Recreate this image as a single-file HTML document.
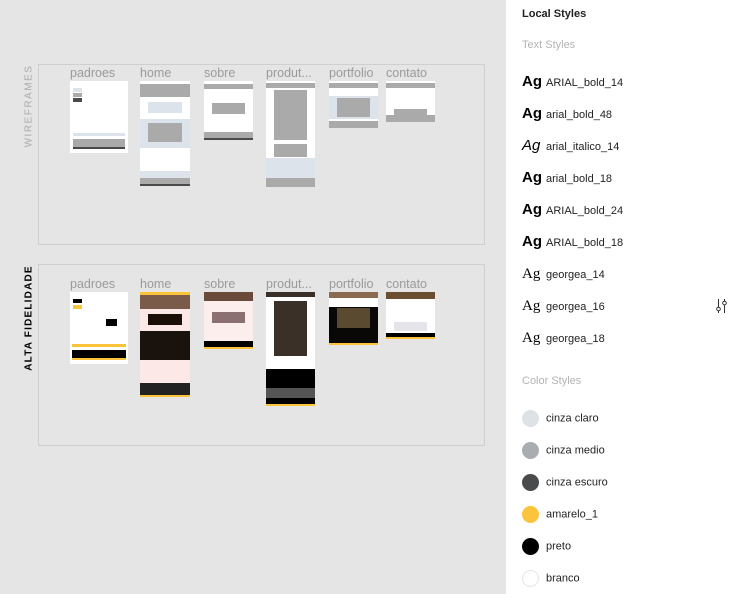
<!DOCTYPE html>
<html><head><meta charset="utf-8"><style>
*{margin:0;padding:0;box-sizing:border-box}
body{width:736px;height:594px;background:#e5e5e5;position:relative;overflow:hidden;font-family:"Liberation Sans",sans-serif}
.a{position:absolute}
.frame{position:absolute;border:1px solid #cfcfcf}
.lbl{position:absolute;font-size:12.5px;color:#9a9a9a;line-height:14px}
.t{position:absolute;background:#fff}
.b{position:absolute}
.side{position:absolute;left:506px;top:0;width:230px;height:594px;background:#fff}
.row{position:absolute;left:16px;font-size:11px;color:#222;line-height:14px}
.ag{display:inline-block;width:24px;font-weight:bold;font-size:15px;color:#000}
.cs{position:absolute;left:16px;font-size:11px;color:#222;line-height:16px}
.dot{display:inline-block;width:17px;height:17px;border-radius:50%;vertical-align:middle;margin-right:7px}
</style></head><body>
<div class="frame" style="left:38px;top:64px;width:447px;height:181px"></div>
<div class="a" style="left:29px;top:106px;transform:translate(-50%,-50%) rotate(-90deg);font-size:10px;letter-spacing:1.5px;color:#aaa;white-space:nowrap">WIREFRAMES</div>
<div class="lbl" style="left:70px;top:66px">padroes</div>
<div class="lbl" style="left:140px;top:66px">home</div>
<div class="lbl" style="left:204px;top:66px">sobre</div>
<div class="lbl" style="left:266px;top:66px">produt...</div>
<div class="lbl" style="left:329px;top:66px">portfolio</div>
<div class="lbl" style="left:386px;top:66px">contato</div>
<div class="t" style="left:70px;top:81px;width:58px;height:72px"><div class="b" style="left:3px;top:7px;width:9px;height:4px;background:#dde3ea"></div><div class="b" style="left:3px;top:12px;width:9px;height:4px;background:#aaa"></div><div class="b" style="left:3px;top:17px;width:9px;height:4px;background:#4a4a4a"></div><div class="b" style="left:3px;top:52px;width:52px;height:3px;background:#dde3ea"></div><div class="b" style="left:3px;top:58px;width:52px;height:8px;background:#aaa"></div><div class="b" style="left:3px;top:66px;width:52px;height:2px;background:#4a4a4a"></div></div>
<div class="t" style="left:140px;top:81px;width:50px;height:105px"><div class="b" style="left:0;top:3px;width:50px;height:13px;background:#aaa"></div><div class="b" style="left:8px;top:21px;width:34px;height:11px;background:#dde3ea"></div><div class="b" style="left:0;top:38px;width:50px;height:29px;background:#dde3ea"></div><div class="b" style="left:8px;top:42px;width:34px;height:19px;background:#aaa"></div><div class="b" style="left:0;top:90px;width:50px;height:7px;background:#dde3ea"></div><div class="b" style="left:0;top:97px;width:50px;height:6px;background:#aaa"></div><div class="b" style="left:0;top:103px;width:50px;height:2px;background:#4a4a4a"></div></div>
<div class="t" style="left:204px;top:81px;width:49px;height:59px"><div class="b" style="left:0;top:3px;width:49px;height:5px;background:#aaa"></div><div class="b" style="left:8px;top:22px;width:33px;height:11px;background:#aaa"></div><div class="b" style="left:0;top:51px;width:49px;height:6px;background:#aaa"></div><div class="b" style="left:0;top:57px;width:49px;height:2px;background:#4a4a4a"></div></div>
<div class="t" style="left:266px;top:81px;width:49px;height:106px"><div class="b" style="left:0;top:2px;width:49px;height:5px;background:#aaa"></div><div class="b" style="left:8px;top:9px;width:33px;height:50px;background:#aaa"></div><div class="b" style="left:8px;top:63px;width:33px;height:13px;background:#aaa"></div><div class="b" style="left:0;top:77px;width:49px;height:20px;background:#dde3ea"></div><div class="b" style="left:0;top:97px;width:49px;height:9px;background:#aaa"></div></div>
<div class="t" style="left:329px;top:81px;width:49px;height:47px"><div class="b" style="left:0;top:2px;width:49px;height:5px;background:#aaa"></div><div class="b" style="left:0;top:15px;width:49px;height:23px;background:#dde3ea"></div><div class="b" style="left:8px;top:17px;width:33px;height:19px;background:#aaa"></div><div class="b" style="left:0;top:40px;width:49px;height:7px;background:#aaa"></div></div>
<div class="t" style="left:386px;top:81px;width:49px;height:41px"><div class="b" style="left:0;top:2px;width:49px;height:5px;background:#aaa"></div><div class="b" style="left:8px;top:28px;width:33px;height:9px;background:#aaa"></div><div class="b" style="left:0;top:34px;width:49px;height:7px;background:#aaa"></div></div>

<div class="frame" style="left:38px;top:264px;width:447px;height:182px"></div>
<div class="a" style="left:29px;top:318px;transform:translate(-50%,-50%) rotate(-90deg);font-size:10px;font-weight:bold;letter-spacing:1.2px;color:#000;white-space:nowrap">ALTA FIDELIDADE</div>
<div class="lbl" style="left:70px;top:277px">padroes</div>
<div class="lbl" style="left:140px;top:277px">home</div>
<div class="lbl" style="left:204px;top:277px">sobre</div>
<div class="lbl" style="left:266px;top:277px">produt...</div>
<div class="lbl" style="left:329px;top:277px">portfolio</div>
<div class="lbl" style="left:386px;top:277px">contato</div>
<div class="t" style="left:70px;top:292px;width:58px;height:72px"><div class="b" style="left:3px;top:7px;width:9px;height:4px;background:#000"></div><div class="b" style="left:3px;top:13px;width:9px;height:4px;background:#fbc33a"></div><div class="b" style="left:36px;top:27px;width:11px;height:7px;background:#000"></div><div class="b" style="left:2px;top:52px;width:54px;height:3px;background:#fbc33a"></div><div class="b" style="left:2px;top:58px;width:54px;height:9px;background:#000"></div><div class="b" style="left:2px;top:66px;width:54px;height:2px;background:#fbc33a"></div></div>
<div class="t" style="left:140px;top:292px;width:50px;height:105px;background:#fde8e8"><div class="b" style="left:0;top:0;width:50px;height:3px;background:#fbc33a"></div><div class="b" style="left:0;top:3px;width:50px;height:14px;background:#7a5a48"></div><div class="b" style="left:8px;top:22px;width:34px;height:11px;background:#1a1008"></div><div class="b" style="left:0;top:39px;width:50px;height:29px;background:#1a120c"></div><div class="b" style="left:0;top:91px;width:50px;height:14px;background:#222"></div><div class="b" style="left:0;top:103px;width:50px;height:2px;background:#fbc33a"></div></div>
<div class="t" style="left:204px;top:292px;width:49px;height:57px;background:#fdeeee"><div class="b" style="left:0;top:0;width:49px;height:9px;background:#6a4a3a"></div><div class="b" style="left:8px;top:20px;width:33px;height:11px;background:#8a7070"></div><div class="b" style="left:0;top:49px;width:49px;height:6px;background:#000"></div><div class="b" style="left:0;top:55px;width:49px;height:2px;background:#fbc33a"></div></div>
<div class="t" style="left:266px;top:292px;width:49px;height:114px"><div class="b" style="left:0;top:0;width:49px;height:5px;background:#3a3028"></div><div class="b" style="left:8px;top:9px;width:33px;height:55px;background:#3a3028"></div><div class="b" style="left:0;top:77px;width:49px;height:37px;background:#000"></div><div class="b" style="left:0;top:96px;width:49px;height:10px;background:#555"></div><div class="b" style="left:0;top:112px;width:49px;height:2px;background:#fbc33a"></div></div>
<div class="t" style="left:329px;top:292px;width:49px;height:53px"><div class="b" style="left:0;top:0;width:49px;height:6px;background:#8a6a50"></div><div class="b" style="left:0;top:15px;width:49px;height:36px;background:#0a0806"></div><div class="b" style="left:8px;top:16px;width:33px;height:20px;background:#5a4a30"></div><div class="b" style="left:0;top:51px;width:49px;height:2px;background:#fbc33a"></div></div>
<div class="t" style="left:386px;top:292px;width:49px;height:47px"><div class="b" style="left:0;top:0;width:49px;height:7px;background:#6a5030"></div><div class="b" style="left:8px;top:30px;width:33px;height:9px;background:#e4e4ea"></div><div class="b" style="left:0;top:41px;width:49px;height:5px;background:#000"></div><div class="b" style="left:0;top:45px;width:49px;height:2px;background:#fbc33a"></div></div>

<div class="side">
<div class="a" style="left:16px;top:8px;font-size:11px;font-weight:bold;color:#222">Local Styles</div>
<div class="a" style="left:16px;top:39px;font-size:11px;color:#b3b3b3">Text Styles</div>
<div class="row" style="top:75px"><span class="ag">Ag</span>ARIAL_bold_14</div>
<div class="row" style="top:107px"><span class="ag">Ag</span>arial_bold_48</div>
<div class="row" style="top:139px"><span class="ag" style="font-weight:normal;font-style:italic">Ag</span>arial_italico_14</div>
<div class="row" style="top:171px"><span class="ag">Ag</span>arial_bold_18</div>
<div class="row" style="top:203px"><span class="ag">Ag</span>ARIAL_bold_24</div>
<div class="row" style="top:235px"><span class="ag">Ag</span>ARIAL_bold_18</div>
<div class="row" style="top:267px"><span class="ag" style="font-weight:normal;font-family:'Liberation Serif',serif">Ag</span>georgea_14</div>
<div class="row" style="top:299px"><span class="ag" style="font-weight:normal;font-family:'Liberation Serif',serif">Ag</span>georgea_16</div>
<div class="row" style="top:331px"><span class="ag" style="font-weight:normal;font-family:'Liberation Serif',serif">Ag</span>georgea_18</div>
<svg class="a" style="left:209px;top:298px" width="13" height="16" viewBox="0 0 13 16" fill="none" stroke="#333" stroke-width="1"><line x1="3.5" y1="1" x2="3.5" y2="9"/><circle cx="3.5" cy="11" r="1.8"/><line x1="3.5" y1="13" x2="3.5" y2="15"/><line x1="9.5" y1="1" x2="9.5" y2="3"/><circle cx="9.5" cy="5" r="1.8"/><line x1="9.5" y1="7" x2="9.5" y2="15"/></svg>
<div class="a" style="left:16px;top:375px;font-size:11px;color:#b3b3b3">Color Styles</div>
<div class="cs" style="top:410px"><span class="dot" style="background:#dde2e7"></span>cinza claro</div>
<div class="cs" style="top:442px"><span class="dot" style="background:#a9acb0"></span>cinza medio</div>
<div class="cs" style="top:474px"><span class="dot" style="background:#4a4b4d"></span>cinza escuro</div>
<div class="cs" style="top:506px"><span class="dot" style="background:#fcc43d"></span>amarelo_1</div>
<div class="cs" style="top:538px"><span class="dot" style="background:#000"></span>preto</div>
<div class="cs" style="top:570px"><span class="dot" style="background:#fff;border:1px solid #e6e6e6"></span>branco</div>
</div>
</body></html>
